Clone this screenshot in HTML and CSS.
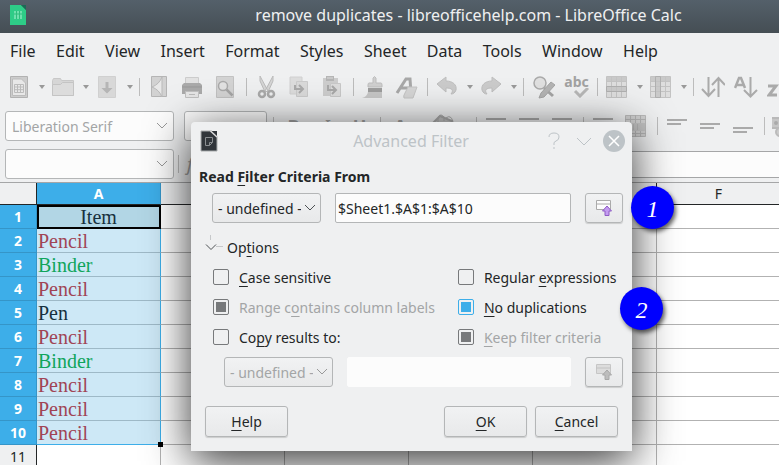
FILE: index.html
```
<!DOCTYPE html>
<html lang="en">
<head>
    <meta charset="UTF-8">
    <meta name="viewport" content="width=device-width, initial-scale=1.0">
    <title>remove duplicates - libreofficehelp.com - LibreOffice Calc</title>
    <link rel="stylesheet" href="styles.css">
</head>
<body>
    <header class="titlebar">
        <svg width="16" height="20" viewBox="0 0 16 20">
            <path d="M0 0h11l5 5v15H0z" fill="#2ecc87"/>
            <path d="M11 0l5 5V0z" fill="#1c6b55"/>
            <path d="M4 6h8v8H4z" fill="#6fe0ae"/>
            <path d="M6.5 6v8M9.5 6v8M4 9h8" stroke="#2ebd7c"/>
        </svg>
        <h1>remove duplicates - libreofficehelp.com - LibreOffice Calc</h1>
    </header>

    <nav class="menubar">
        <a href="#">File</a>
        <a href="#">Edit</a>
        <a href="#">View</a>
        <a href="#">Insert</a>
        <a href="#">Format</a>
        <a href="#">Styles</a>
        <a href="#">Sheet</a>
        <a href="#">Data</a>
        <a href="#">Tools</a>
        <a href="#">Window</a>
        <a href="#">Help</a>
    </nav>

    <div class="toolbar">
        <button class="tool drop" aria-label="New">
            <svg viewBox="0 0 24 24"><path d="M3.500 1.500h17v21h-17z" fill="#ccc" stroke="#b2b2b2"/><path d="M5.500 4h9l4 4v12.500h-13z" fill="#e8e8e8" stroke="#bcbcbc"/><path d="M7.500 9.500h9v8h-9zM7.500 12h9M7.500 14.700h9M10.500 9.500v8M13.500 9.500v8" fill="none" stroke="#bbb"/></svg>
            <i></i>
        </button>
        <button class="tool drop" aria-label="Open">
            <svg viewBox="0 0 24 24"><path d="M1.500 20.500v-15l1-2h7l1 2h12v15z" fill="#d6d6d6" stroke="#c8c8c8"/><path d="M1.500 9.500h8l2-2h11v13h-21z" fill="#dcdcdc" stroke="#c4c4c4"/></svg>
            <i></i>
        </button>
        <button class="tool drop" aria-label="Save">
            <svg viewBox="0 0 24 24"><path d="M3.500 1.500h17v21h-17z" fill="#d8d8d8" stroke="#d0d0d0"/><path d="M10.500 7h3v6h4L12 18.500 6.500 13h4z" fill="#b5b5b5"/></svg>
            <i></i>
        </button>
        <span class="sep"></span>
        <button class="tool" aria-label="Export as PDF">
            <svg viewBox="0 0 24 24"><path d="M4.500 1.500h15v20h-15z" fill="#d2d2d2" stroke="#b5b5b5"/><path d="M5 12c5-2 8-5 10-10v20C13 17 10 14 5 12z" fill="#e8e8e8" stroke="#b9b9b9"/></svg>
        </button>
        <button class="tool" aria-label="Print">
            <svg viewBox="0 0 24 24"><path d="M5.500 2.500h13v7h-13z" fill="#e2e2e2" stroke="#ccc"/><path d="M2 10l2-2h16l2 2v9H2z" fill="#aaa"/><path d="M2 12h20" stroke="#999"/><path d="M5.500 16.500h13v6h-13z" fill="#e6e6e6" stroke="#c0c0c0"/><path d="M9 19.500h6" stroke="#bbb"/></svg>
        </button>
        <button class="tool" aria-label="Print Preview">
            <svg viewBox="0 0 24 24"><path d="M3.500 1.500h17v21h-17z" fill="#d3d3d3" stroke="#c2c2c2"/><circle cx="10" cy="11" r="4.500" fill="#e2e2e2" stroke="#aaa" stroke-width="1.500"/><path d="M13.500 14.500l6 6" stroke="#a5a5a5" stroke-width="2.500"/></svg>
        </button>
        <span class="sep"></span>
        <button class="tool" aria-label="Cut">
            <svg viewBox="0 0 24 24"><path d="M6 1l8 15-3 1L6 6zM19 1l-8 15 3 1 5-11z" fill="#d6d6d6" stroke="#bbb"/><g fill="none" stroke="#aaa" stroke-width="2.500"><circle cx="8" cy="19" r="3"/><circle cx="17" cy="19" r="3"/></g></svg>
        </button>
        <button class="tool" aria-label="Copy">
            <svg viewBox="0 0 24 24"><path d="M3 2h12v17H3z" fill="#ddd" stroke="#d0d0d0"/><path d="M9.500 6.500h11v15h-11z" fill="#dadada" stroke="#cbcbcb"/><path d="M8 10v4h7M12 10l4 4-4 4" fill="none" stroke="#aaa" stroke-width="2"/></svg>
        </button>
        <button class="tool" aria-label="Paste">
            <svg viewBox="0 0 24 24"><path d="M3 3h15v18H3z" fill="#cdcdcd"/><path d="M6 1h8v5H6z" fill="#b5b5b5"/><path d="M7 3h6" stroke="#ddd"/><path d="M10.500 8.500h10v13h-10z" fill="#dcdcdc" stroke="#c8c8c8"/><path d="M8 10v5h7M12 11l4 4-4 4" fill="none" stroke="#a8a8a8" stroke-width="2"/></svg>
        </button>
        <span class="sep"></span>
        <button class="tool" aria-label="Clone Formatting">
            <svg viewBox="0 0 24 24"><path d="M12 8V3q1.500-3 3 0v5h5q1 0 1 2v2H7v-2q0-2 1-2z" fill="#d0d0d0" stroke="#bebebe"/><path d="M7 13h14v4H7z" fill="#9d9d9d"/><path d="M7 17h14v6H1q5-1 6-6z" fill="#c7c7c7"/></svg>
        </button>
        <button class="tool" aria-label="Clear Formatting">
            <svg viewBox="0 0 24 24"><path d="M3 18L12 4h4l1 14M7 13h9" fill="none" stroke="#a8a8a8" stroke-width="3"/><path d="M14 12h9l-4 11h-9q-1-2 1-5z" fill="#d5d5d5" stroke="#c4c4c4"/></svg>
        </button>
        <span class="sep"></span>
        <button class="tool drop" aria-label="Undo">
            <svg viewBox="0 0 24 24"><path d="M2 9l9-7v4c7 0 11 4 10 9-1 3-3 4-5 4 3-4 1-6-5-6v4z" fill="#cbcbcb" stroke="#bfbfbf"/></svg>
            <i></i>
        </button>
        <button class="tool drop" aria-label="Redo">
            <svg viewBox="0 0 24 24"><path d="M22 9l-9-7v4C6 6 2 10 3 15c1 3 3 4 5 4-3-4-1-6 5-6v4z" fill="#cbcbcb" stroke="#bfbfbf"/></svg>
            <i></i>
        </button>
        <span class="sep"></span>
        <button class="tool" aria-label="Find and Replace">
            <svg viewBox="0 0 24 24"><circle cx="9" cy="8" r="6" fill="#e0e0e0" stroke="#aaa" stroke-width="1.500"/><path d="M13 13l9 8" stroke="#a5a5a5" stroke-width="3"/><path d="M8 23l2-5L20 7l4 3-11 12z" fill="#b4b4b4" stroke="#a5a5a5"/></svg>
        </button>
        <button class="tool spell" aria-label="Spelling">
            <b>abc</b>
            <svg viewBox="0 0 24 10"><path d="M10 3l5 5 8-8" fill="none" stroke="#b8b8b8" stroke-width="3"/></svg>
        </button>
        <span class="sep"></span>
        <button class="tool drop" aria-label="Row">
            <svg viewBox="0 0 24 24"><path d="M1.500 1.500h20v21h-20z" fill="#dedede" stroke="#c3c3c3"/><path d="M2 2h19v5H2z" fill="#c9c9c9"/><path d="M2 12h19v4H2z" fill="#cacaca"/><path d="M1 6.500h21M1 11.500h21M1 16.500h21M6.500 1v22M11.500 1v22M16.500 1v22" stroke="#c3c3c3"/><path d="M1.500 11.500h20v5h-20z" fill="none" stroke="#b0b0b0"/></svg>
            <i></i>
        </button>
        <button class="tool drop" aria-label="Column">
            <svg viewBox="0 0 24 24"><path d="M1.500 1.500h20v21h-20z" fill="#dedede" stroke="#c3c3c3"/><path d="M2 2h19v5H2z" fill="#c9c9c9"/><path d="M7 7h5v15H7z" fill="#cacaca"/><path d="M1 6.500h21M1 11.500h21M1 16.500h21M6.500 1v22M11.500 1v22M16.500 1v22" stroke="#c3c3c3"/><path d="M6.500 1.500h5v21h-5z" fill="none" stroke="#b0b0b0"/></svg>
            <i></i>
        </button>
        <span class="sep"></span>
        <button class="tool" aria-label="Sort">
            <svg viewBox="0 0 24 24"><path d="M7.500 2v18M1 14l6.500 7 6.500-7M17.500 22V3M11 10l6.500-7L24 10" fill="none" stroke="#aaa" stroke-width="2"/></svg>
        </button>
        <button class="tool" aria-label="Sort Ascending">
            <svg viewBox="0 0 24 24"><path d="M1 13L5 3h2l4 10M3 10h6" fill="none" stroke="#aaa" stroke-width="2.500"/><path d="M16.500 2v19M10 15l6.500 6.500L23 15" fill="none" stroke="#aaa" stroke-width="2"/></svg>
        </button>
        <button class="tool" aria-label="Sort Descending">
            <svg viewBox="0 0 24 24"><path d="M1 11h8L2 20h8" fill="none" stroke="#aaa" stroke-width="3"/><path d="M17 22V3" stroke="#aaa" stroke-width="2"/></svg>
        </button>
    </div>

    <div class="toolbar format">
        <div class="combo font">
            <input type="text" value="Liberation Serif" aria-label="Font name" disabled>
            <svg viewBox="0 0 12 8"><path d="M1 1l5 5 5-5"/></svg>
        </div>
        <div class="combo size">
            <input type="text" aria-label="Font size" disabled>
        </div>
        <span class="sep"></span>
        <button class="tool letter" aria-label="Bold"><b>B</b></button>
        <button class="tool letter" aria-label="Italic"><em>I</em></button>
        <button class="tool letter" aria-label="Underline"><b>U</b></button>
        <span class="sep"></span>
        <button class="tool drop letter" aria-label="Font Color"><b>A</b></button>
        <button class="tool drop" aria-label="Highlighting">
            <svg viewBox="0 0 24 24"><path d="M1 9l7-7 12 5-6 14z" fill="#c2c2c2" stroke="#aaa"/><path d="M6 8V3q3-4 6 0v4M14 4q5-4 7 4v8" fill="none" stroke="#aaa" stroke-width="1"/></svg>
        </button>
        <span class="sep"></span>
        <button class="tool" aria-label="Align Left"><svg viewBox="0 0 24 24"><path d="M2 5h20M2 10h14M2 15h20"/></svg></button>
        <button class="tool" aria-label="Center"><svg viewBox="0 0 24 24"><path d="M2 5h20M5 10h14M2 15h20"/></svg></button>
        <button class="tool" aria-label="Align Right"><svg viewBox="0 0 24 24"><path d="M2 5h20M8 10h14M2 15h20"/></svg></button>
        <span class="sep"></span>
        <button class="tool" aria-label="Wrap Text"><svg viewBox="0 0 24 24"><path d="M2 5h20M2 10h20M2 15h12"/></svg></button>
        <button class="tool" aria-label="Merge Cells">
            <svg viewBox="0 0 24 24"><path d="M1.500 1.500h20v21h-20z" fill="#d2d2d2" stroke="#bbb" stroke-width="1"/><path d="M2 9h19v8H2z" fill="#c3c3c3" stroke="none"/><path d="M1 5.500h21M1 19.500h21M6.500 1v8M11.500 1v8M16.500 1v8M6.500 17v6M11.500 17v6M16.500 17v6M9.500 10v6M13.500 10v6" stroke="#b5b5b5" stroke-width="1"/></svg>
        </button>
        <span class="sep"></span>
        <button class="tool" aria-label="Align Top"><svg viewBox="0 0 24 24"><path d="M2 6h20M2 10h14"/></svg></button>
        <button class="tool" aria-label="Center Vertically"><svg viewBox="0 0 24 24"><path d="M2 10h20M2 14h14"/></svg></button>
        <button class="tool" aria-label="Align Bottom"><svg viewBox="0 0 24 24"><path d="M2 14h20M2 18h14"/></svg></button>
        <span class="sep"></span>
        <button class="tool" aria-label="Number Format">
            <svg viewBox="0 0 24 24"><path d="M-1 4h12v10H-1z" fill="#c6c6c6" stroke="#b9b9b9"/><circle cx="4" cy="9" r="1" fill="#aaa"/><circle cx="8" cy="18" r="4" fill="#ccc" stroke="#bbb"/></svg>
        </button>
    </div>

    <div class="toolbar formula">
        <div class="combo font">
            <input type="text" aria-label="Name box" disabled>
            <svg viewBox="0 0 12 8"><path d="M1 1l5 5 5-5"/></svg>
        </div>
        <span class="sep"></span>
        <button class="tool letter wizard" aria-label="Function Wizard"><em>f</em></button>
        <input class="input-line" type="text" aria-label="Input line" disabled>
    </div>

    <main class="sheet">
        <table>
            <thead>
                <tr><th class="corner"></th><th class="sel">A</th><th>B</th><th>C</th><th>D</th><th>E</th><th>F</th></tr>
            </thead>
            <tbody>
                <tr class="sel"><th>1</th><td class="cursor">Item</td><td></td><td></td><td></td><td></td><td></td></tr>
                <tr class="sel"><th>2</th><td class="red">Pencil</td><td></td><td></td><td></td><td></td><td></td></tr>
                <tr class="sel"><th>3</th><td class="green">Binder</td><td></td><td></td><td></td><td></td><td></td></tr>
                <tr class="sel"><th>4</th><td class="red">Pencil</td><td></td><td></td><td></td><td></td><td></td></tr>
                <tr class="sel"><th>5</th><td>Pen</td><td></td><td></td><td></td><td></td><td></td></tr>
                <tr class="sel"><th>6</th><td class="red">Pencil</td><td></td><td></td><td></td><td></td><td></td></tr>
                <tr class="sel"><th>7</th><td class="green">Binder</td><td></td><td></td><td></td><td></td><td></td></tr>
                <tr class="sel"><th>8</th><td class="red">Pencil</td><td></td><td></td><td></td><td></td><td></td></tr>
                <tr class="sel"><th>9</th><td class="red">Pencil</td><td></td><td></td><td></td><td></td><td></td></tr>
                <tr class="sel last"><th>10</th><td class="red">Pencil</td><td></td><td></td><td></td><td></td><td></td></tr>
                <tr><th>11</th><td></td><td></td><td></td><td></td><td></td><td></td></tr>
            </tbody>
        </table>
    </main>

    <form class="dialog" role="dialog" aria-labelledby="dialogTitle">
        <header class="dialog-title">
            <svg class="app" viewBox="0 0 18 22"><path d="M1 1h11l5 5v15H1z" fill="#31363b" stroke="#a9acae"/><path d="M11 1h6v6z" fill="#31363b"/><path d="M10.500 1l6.500 6" stroke="#ddd" stroke-width="1.500"/><path d="M5.500 7.500h7v5l-3 3h-4zM12.500 12.500h-3v3" fill="none" stroke="#8b8f92"/></svg>
            <h2 id="dialogTitle">Advanced Filter</h2>
            <button type="button" aria-label="What's this"><svg viewBox="0 0 22 22"><path d="M6 7q0-4 5-4t5 4q0 3-3 4t-2 4M11 17v2"/></svg></button>
            <button type="button" aria-label="Shade"><svg viewBox="0 0 22 22"><path d="M4 8l7 7 7-7"/></svg></button>
            <button type="button" aria-label="Close"><svg viewBox="0 0 22 22"><circle cx="11" cy="11" r="11" fill="#bdc3c7" stroke="none"/><path d="M6 6l10 10M16 6L6 16" class="cross"/></svg></button>
        </header>

        <label class="heading" for="range">Read <u>F</u>ilter Criteria From</label>
        <div class="row">
            <div class="select">
                <select aria-label="Named range"><option>- undefined -</option></select>
                <svg viewBox="0 0 12 8"><path d="M1 1l5 5 5-5"/></svg>
            </div>
            <input type="text" id="range" value="$Sheet1.$A$1:$A$10">
            <button type="button" class="btn shrink" aria-label="Shrink">
                <svg viewBox="0 0 18 18"><path d="M1.500 1.500h14v9h-14z" fill="#fcfcfc" stroke="#aaa"/><path d="M1 5h15" stroke="#aaa"/><path d="M12 7l4.500 5h-2.500v4.500h-4V12H7.500z" fill="#c39bf0" stroke="#8e5bc4"/></svg>
            </button>
        </div>

        <details open>
            <summary>
                <svg viewBox="0 0 20 18"><path d="M6.500 0v5M12 11.500h7" stroke="#c6c8ca"/><path d="M2 9.500l5 5 5-5" stroke="#4d5154"/></svg>
                Op<u>t</u>ions
            </summary>
            <div class="options">
                <label><input type="checkbox"><span><u>C</u>ase sensitive</span></label>
                <label><input type="checkbox"><span>Regular <u>e</u>xpressions</span></label>
                <label class="off"><input type="checkbox" checked disabled><span>Range c<u>o</u>ntains column labels</span></label>
                <label><input type="checkbox" checked><span><u>N</u>o duplications</span></label>
                <label><input type="checkbox"><span>Co<u>p</u>y results to:</span></label>
                <label class="off"><input type="checkbox" checked disabled><span><u>K</u>eep filter criteria</span></label>
            </div>
            <div class="row copy">
                <div class="select">
                    <select aria-label="Target range" disabled><option>- undefined -</option></select>
                    <svg viewBox="0 0 12 8"><path d="M1 1l5 5 5-5"/></svg>
                </div>
                <input type="text" aria-label="Copy results to" disabled>
                <button type="button" class="btn shrink" aria-label="Shrink" disabled>
                    <svg viewBox="0 0 18 18"><path d="M1.500 1.500h14v9h-14z" fill="#dcdcdc" stroke="#c6c6c6"/><path d="M1 5h15" stroke="#c2c2c2"/><path d="M12 7l4.500 5h-2.500v4.500h-4V12H7.500z" fill="#bdbdbd" stroke="#a8a8a8"/></svg>
                </button>
            </div>
        </details>

        <footer class="actions">
            <button type="button" class="btn help"><u>H</u>elp</button>
            <button type="button" class="btn"><u>O</u>K</button>
            <button type="button" class="btn"><u>C</u>ancel</button>
        </footer>

        <span class="badge one">1</span>
        <span class="badge two">2</span>
    </form>
</body>
</html>
```

FILE: styles.css
```
:root {
    --window: #eff0f1;
    --text: #232627;
    --muted: #a3a5a6;
    --line: #b4b6b7;
    --blue: #3daee9;
    --view: #fcfcfc;
}

* {
    box-sizing: border-box;
}

body {
    margin: 0;
    height: 100vh;
    overflow: hidden;
    display: flex;
    flex-direction: column;
    position: relative;
    font-family: "Noto Sans", sans-serif;
    font-size: 14px;
    background: var(--window);
    color: var(--text);
}

button, input, select {
    font: inherit;
    color: inherit;
    margin: 0;
}

u {
    text-underline-offset: 3px;
    text-decoration-thickness: 1px;
    text-decoration-skip-ink: none;
}

/* window title and menu */
.titlebar {
    flex: none;
    height: 33px;
    padding: 0 0 4px 10px;
    display: flex;
    align-items: center;
    background: linear-gradient(#54606a, #454e54);
    color: #eff0f1;
}

.titlebar h1 {
    flex: 1;
    margin: 0;
    padding-left: 132px;
    text-align: center;
    font-size: 16px;
    font-weight: normal;
    white-space: nowrap;
}

.menubar {
    flex: none;
    height: 36px;
    max-width: 660px;
    padding: 0 2px 0 10px;
    display: flex;
    align-items: center;
    justify-content: space-between;
    font-size: 16px;
}

.menubar a {
    color: inherit;
    text-decoration: none;
}

/* toolbars */
.toolbar {
    flex: none;
    height: 35px;
    padding-left: 3px;
    display: flex;
    align-items: center;
    overflow: hidden;
}

.tool {
    flex: none;
    width: 33px;
    height: 24px;
    padding: 0 4px;
    border: 0;
    background: none;
    display: flex;
    align-items: center;
    color: #a2a2a2;
}

.tool svg {
    flex: none;
    width: 24px;
    height: 24px;
}

.tool.drop {
    width: 44px;
    gap: 8px;
}

.tool i {
    border: 3px solid transparent;
    border-top: 4px solid #999;
    border-bottom: 0;
}

.sep {
    flex: none;
    width: 8px;
    height: 18px;
    background: linear-gradient(#bcbcbc, #bcbcbc) center / 1px 100% no-repeat;
}

.spell {
    flex-direction: column;
    font-size: 14px;
    line-height: 13px;
}

.spell svg {
    height: 10px;
}

.letter {
    justify-content: center;
    font-size: 18px;
    line-height: 18px;
}

.letter.drop {
    justify-content: flex-start;
    padding-left: 10px;
}

.letter.wizard {
    justify-content: flex-start;
    padding-left: 5px;
}

.format {
    height: 37px;
    padding: 7px 0 0 5px;
}

.format .tool svg {
    fill: none;
    stroke: #aaa;
    stroke-width: 2px;
}

.format .size + .sep {
    margin-left: 2px;
}

.combo {
    flex: none;
    width: 169px;
    height: 30px;
    padding-right: 5px;
    display: flex;
    align-items: center;
    border: 1px solid var(--line);
    border-radius: 3px;
    background: var(--view);
}

.combo.size {
    width: 83px;
    margin-left: 10px;
}

.combo input {
    flex: 1;
    min-width: 0;
    padding: 0 6px;
    border: 0;
    background: none;
    color: var(--muted);
}

.combo svg {
    width: 12px;
    height: 8px;
    fill: none;
    stroke: #999;
}

.formula {
    height: 41px;
    padding: 8px 0 3px 5px;
}

.input-line {
    flex: 1;
    height: 27px;
    border: 1px solid #a5a6a7;
    border-right: 0;
    background: var(--view);
}

/* spreadsheet */
.sheet {
    flex: 1;
    min-height: 0;
    overflow: hidden;
    border-top: 1px solid #a5a6a7;
    background: white;
}

.sheet table {
    width: 781px;
    table-layout: fixed;
    border-collapse: separate;
    border-spacing: 0;
}

.sheet th, .sheet td {
    height: 24px;
    padding: 1px 0 0;
    border-right: 1px solid #b2b2b2;
    border-bottom: 1px solid #b2b2b2;
    line-height: 22px;
}

.sheet th {
    background: var(--window);
    font-weight: normal;
    border-right-color: var(--text);
}

.sheet thead th {
    height: 22px;
    line-height: 20px;
    border-bottom-color: var(--text);
}

.sheet .corner {
    width: 37px;
}

.sheet thead .sel, .sheet .sel th {
    background: var(--blue);
    border-color: #3595c8;
    color: white;
    font-weight: bold;
}

.sheet thead .sel {
    border-bottom-color: var(--text);
}

.sheet td {
    padding-left: 1px;
    font-family: "Liberation Serif", serif;
    font-size: 20px;
}

.sheet .sel td:nth-child(2) {
    position: relative;
    background: #cde8f6;
    border-right-color: var(--blue);
    border-bottom-color: #9eb9c7;
    color: #16303d;
}

.sheet .sel td.red {
    color: #a04455;
}

.sheet .sel td.green {
    color: #10a55c;
}

.sheet .sel td.cursor {
    padding-left: 0;
    background: #b2d6e5;
    outline: 2px solid black;
    outline-offset: -2px;
    text-align: center;
}

.sheet .last td:nth-child(2) {
    border-bottom-color: var(--blue);
}

.sheet .last td:nth-child(2)::after {
    content: "";
    position: absolute;
    right: -3px;
    bottom: -3px;
    width: 5px;
    height: 5px;
    background: black;
}

/* filter dialog */
.dialog {
    position: absolute;
    left: 191px;
    top: 122px;
    width: 441px;
    padding: 0 9px 14px 8px;
    border-radius: 4px 4px 0 0;
    background: var(--window);
    box-shadow: 0 10px 45px rgba(0, 0, 0, 0.8);
}

.dialog-title {
    height: 37px;
    margin-right: -2px;
    display: flex;
    align-items: center;
    gap: 8px;
    color: #bdc3c7;
}

.dialog-title .app {
    width: 20px;
    height: 22px;
}

.dialog-title h2 {
    flex: 1;
    margin: 0;
    padding-left: 60px;
    font-size: 16px;
    font-weight: normal;
    text-align: center;
}

.dialog-title button {
    width: 22px;
    height: 22px;
    padding: 0;
    border: 0;
    background: none;
}

.dialog-title button svg {
    display: block;
    fill: none;
    stroke: #bdc3c7;
}

.dialog-title .cross {
    stroke: #fff;
    stroke-width: 1.5px;
}

.heading {
    display: block;
    height: 34px;
    line-height: 36px;
    font-weight: bold;
}

.row {
    display: flex;
    gap: 14px;
    padding-left: 13px;
}

.row.copy {
    padding: 5px 0 0 25px;
}

.row > input {
    flex: 1;
    min-width: 0;
    height: 30px;
    padding: 0 2px;
    border: 1px solid var(--line);
    border-radius: 2px;
    background: var(--view);
}

.row > input:disabled {
    border-color: var(--view);
}

.select {
    width: 109px;
    display: grid;
    align-items: center;
}

.select > * {
    grid-area: 1 / 1;
}

.select select {
    width: 100%;
    height: 30px;
    padding: 0 19px 0 5px;
    appearance: none;
    border: 1px solid var(--line);
    border-radius: 3px;
    background: linear-gradient(#f1f2f3, #e8e9ea);
    opacity: 1;
}

.select select:disabled {
    color: var(--muted);
}

.select svg {
    width: 12px;
    height: 8px;
    margin-right: 5px;
    justify-self: end;
    pointer-events: none;
    fill: none;
    stroke: #4d5154;
}

.select select:disabled + svg {
    stroke: #999;
}

.btn {
    width: 83px;
    height: 31px;
    padding: 0;
    border: 1px solid var(--line);
    border-radius: 3px;
    background: linear-gradient(#f1f2f3, #e8e9ea);
    box-shadow: 0 1px 1px rgba(0, 0, 0, 0.15);
}

.btn.shrink {
    width: 38px;
    height: 30px;
    display: grid;
    place-items: center;
}

.btn.shrink svg {
    width: 18px;
    height: 18px;
}

summary {
    height: 39px;
    padding: 9px 0 0 5px;
    display: flex;
    align-items: center;
    list-style: none;
}

summary svg {
    width: 20px;
    height: 18px;
    margin: 0 3px 6px 0;
    fill: none;
}

.options {
    padding-left: 14px;
    display: grid;
    grid-template-columns: auto 1fr;
    grid-auto-rows: 30px;
    column-gap: 23px;
}

.options label {
    display: flex;
    align-items: center;
    gap: 10px;
    white-space: nowrap;
}

.options .off {
    color: var(--muted);
}

.options input {
    flex: none;
    width: 16px;
    height: 16px;
    appearance: none;
    display: grid;
    place-items: center;
    border: 1px solid #77797b;
    border-radius: 2px;
}

.options input:checked::before {
    content: "";
    width: 10px;
    height: 10px;
    background: #77797b;
}

.options input:checked:enabled {
    border-color: var(--blue);
}

.options input:checked:enabled::before {
    background: var(--blue);
}

.actions {
    padding: 19px 5px 0 6px;
    display: flex;
    gap: 8px;
}

.actions .help {
    margin-right: auto;
}

/* step markers over the dialog edge */
.badge {
    position: absolute;
    width: 43px;
    height: 43px;
    border-radius: 50%;
    background: #0000fe;
    color: white;
    font: italic 24px/46px "Liberation Serif", serif;
    text-align: center;
    box-shadow: 2px 3px 4px rgba(0, 0, 0, 0.6);
}

.badge.one {
    right: -42px;
    top: 64px;
}

.badge.two {
    right: -31px;
    top: 165px;
}
```
